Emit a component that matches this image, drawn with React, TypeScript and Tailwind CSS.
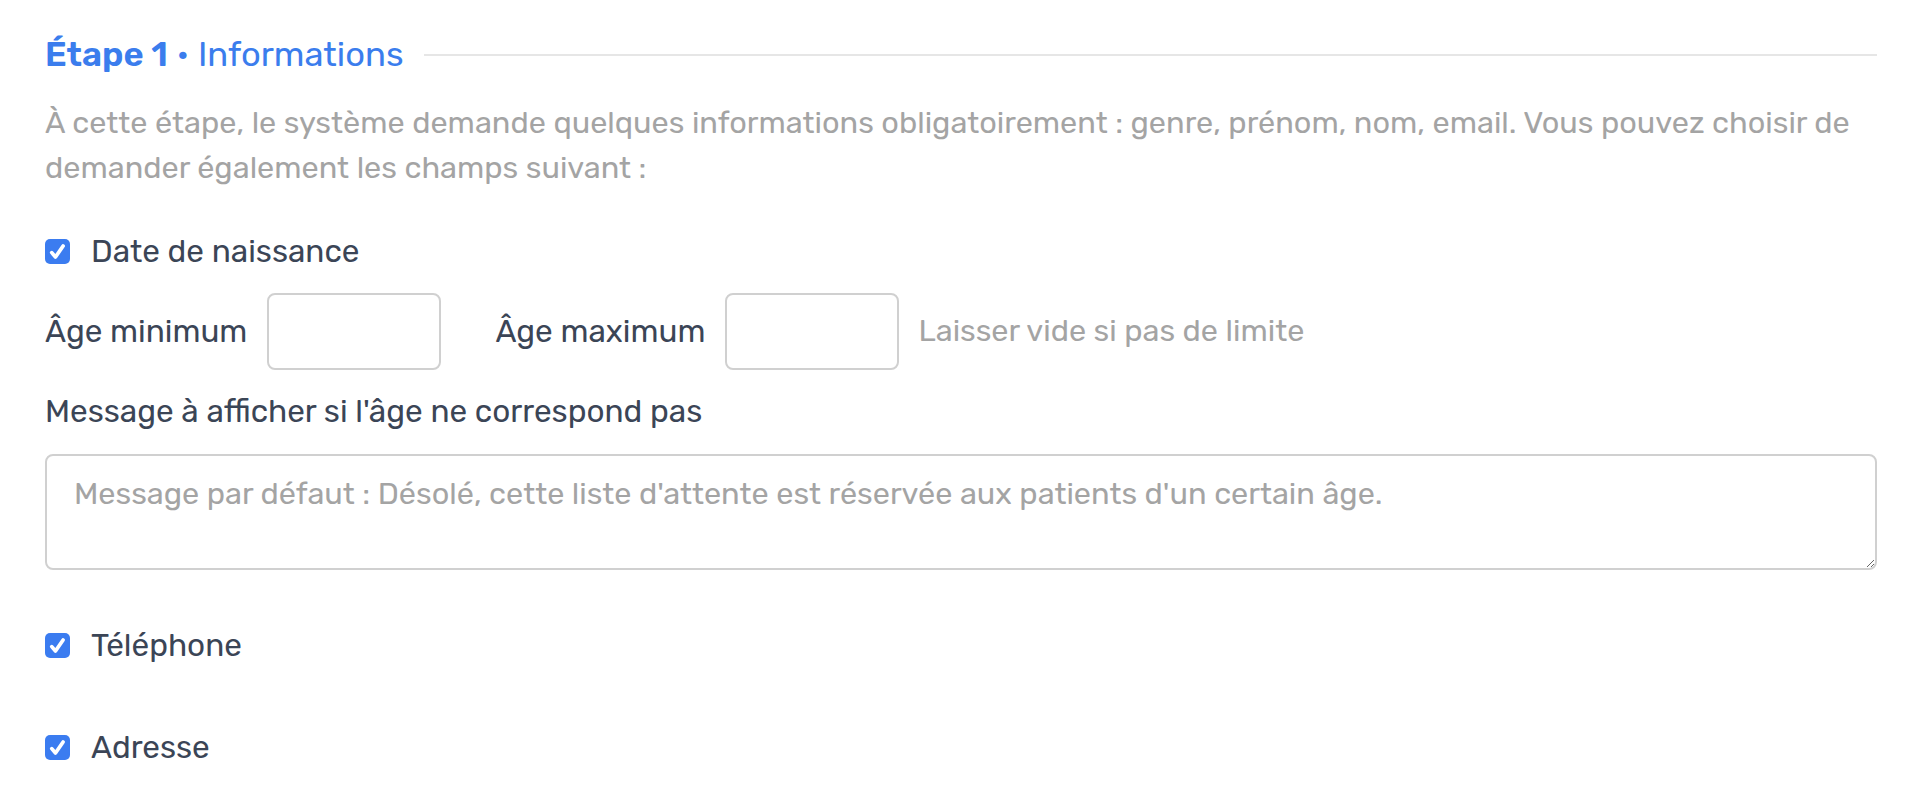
import React from 'react'

const font = { fontFamily: 'Rubik, Inter, "Noto Sans", sans-serif' }

function Check({ label }: { label: string }) {
  return (
    <label className="flex items-center h-[45px] text-[31.5px] text-[#3b4556]">
      <span className="flex items-center justify-center w-[25px] h-[25px] rounded-[5px] bg-[#3b7cf0]">
        <svg viewBox="0 0 16 16" className="w-[23px] h-[23px]" fill="none" stroke="#fff" strokeWidth="2.6" strokeLinecap="round" strokeLinejoin="round">
          <path d="M4 8.8l2.6 3 5.3-7.6" />
        </svg>
      </span>
      <span className="ml-[21px]">{label}</span>
    </label>
  )
}

export default function App() {
  return (
    <div className="bg-white w-[1924px] h-[792px] pl-[45px] pr-[47px] pt-[30px]" style={font}>
      <div className="flex items-center h-[50px]">
        <h2 className="text-[34.5px] leading-[50px] text-[#3b7ded] whitespace-nowrap">
          <span className="font-semibold">Étape 1</span> • Informations
        </h2>
        <div className="flex-1 h-[2px] bg-[#e6e6e6] ml-[21px]" />
      </div>

      <p className="mt-[20px] text-[30.7px] leading-[45px] text-[#a4a4a4]">
        À cette étape, le système demande quelques informations obligatoirement : genre, prénom, nom, email. Vous pouvez choisir de demander également les champs suivant :
      </p>

      <div className="mt-[39px]">
        <Check label="Date de naissance" />
      </div>

      <div className="mt-[19px] flex items-center h-[77px] text-[31.5px]">
        <span className="text-[#3b4556]">Âge minimum</span>
        <input type="text" className="ml-[20px] w-[174px] h-[77px] rounded-[8px] border-2 border-[#d0d0d0] outline-none" />
        <span className="ml-[54px] text-[#3b4556]">Âge maximum</span>
        <input type="text" className="ml-[20px] w-[174px] h-[77px] rounded-[8px] border-2 border-[#d0d0d0] outline-none" />
        <span className="ml-[19px] text-[30.7px] text-[#a4a4a4]">Laisser vide si pas de limite</span>
      </div>

      <div className="mt-[19px] h-[45px] leading-[45px] text-[31.5px] text-[#3b4556]">
        Message à afficher si l'âge ne correspond pas
      </div>

      <textarea
        className="mt-[20px] block w-full h-[116px] rounded-[8px] border-2 border-[#d0d0d0] px-[27px] py-[18px] text-[30.7px] leading-[40px] outline-none placeholder:text-[#a4a4a4]"
        style={font}
        placeholder="Message par défaut : Désolé, cette liste d'attente est réservée aux patients d'un certain âge."
      />

      <div className="mt-[53px]">
        <Check label="Téléphone" />
      </div>
      <div className="mt-[57px]">
        <Check label="Adresse" />
      </div>
    </div>
  )
}
